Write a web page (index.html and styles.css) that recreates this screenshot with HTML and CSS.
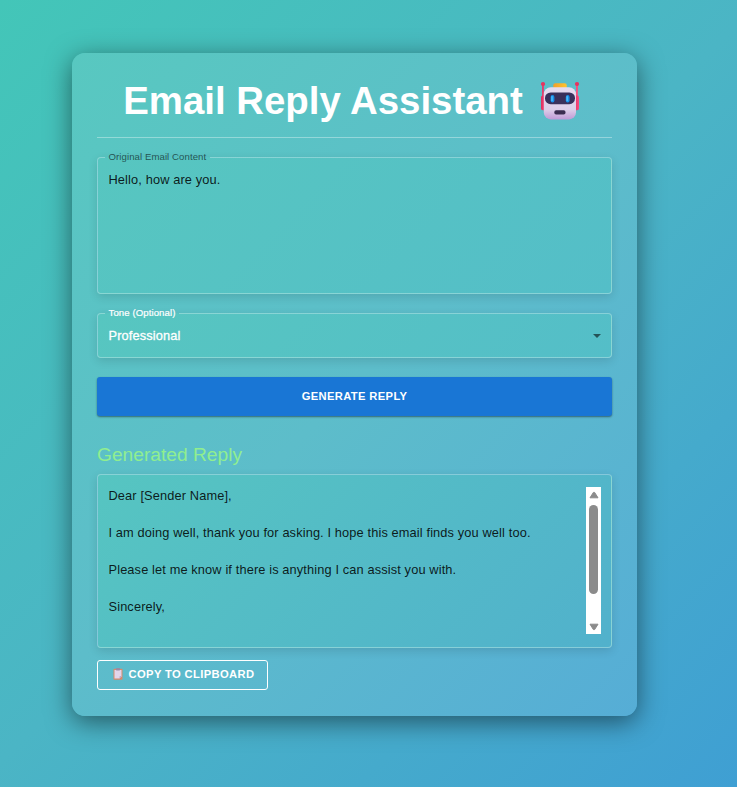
FILE: index.html
```html
<!DOCTYPE html>
<html lang="en">
<head>
<meta charset="utf-8">
<title>Email Reply Assistant</title>
<link rel="stylesheet" href="styles.css">
</head>
<body>
<main class="card">
  <h1 class="title"><span class="title-text">Email Reply Assistant</span>
    <svg class="robot" viewBox="0 0 40 40" aria-hidden="true">
      <defs>
        <linearGradient id="head" x1="0" y1="0" x2="0" y2="1"><stop offset="0" stop-color="#e6dcf0"/><stop offset=".7" stop-color="#dccde8"/><stop offset="1" stop-color="#c09ad6"/></linearGradient>
        <linearGradient id="cap" x1="0" y1="0" x2="1" y2="0"><stop offset="0" stop-color="#f0a02c"/><stop offset="1" stop-color="#ffc42d"/></linearGradient>
        <linearGradient id="ear" x1="0" y1="0" x2="1" y2="0"><stop offset="0" stop-color="#e0305e"/><stop offset="1" stop-color="#fa4a80"/></linearGradient>
      </defs>
      <rect x="2" y="3" width="1.9" height="16" fill="#e0406f"/>
      <rect x="36" y="3" width="1.9" height="16" fill="#f5517f"/>
      <circle cx="3" cy="3" r="2.1" fill="#e8325f"/>
      <circle cx="37" cy="3" r="2.1" fill="#e8325f"/>
      <rect x="1" y="14.5" width="5" height="14.8" rx="1.8" fill="url(#ear)"/>
      <rect x="34" y="14.5" width="5" height="14.8" rx="1.8" fill="url(#ear)"/>
      <rect x="13.3" y="2.2" width="13.4" height="6" rx="2" fill="url(#cap)"/>
      <rect x="3.8" y="6.2" width="32.2" height="32.2" rx="7" fill="url(#head)"/>
      <rect x="5" y="11.4" width="30" height="11.8" rx="5.7" fill="#39305b"/>
      <rect x="10.6" y="14" width="3.8" height="7.4" rx="1.9" fill="#168ee8"/>
      <rect x="25.8" y="14" width="3.8" height="7.4" rx="1.9" fill="#168ee8"/>
      <rect x="11.2" y="15" width="1.6" height="5.2" rx=".8" fill="#46b9fa"/>
      <rect x="26.4" y="15" width="1.6" height="5.2" rx=".8" fill="#46b9fa"/>
      <rect x="14.3" y="29.2" width="11.2" height="4.4" rx="1.8" fill="#3a2c50"/>
    </svg>
  </h1>

  <fieldset class="field field-email">
    <legend><span>Original Email Content</span></legend>
    <div class="value">Hello, how are you.</div>
  </fieldset>

  <fieldset class="field field-tone">
    <legend><span>Tone (Optional)</span></legend>
    <div class="select"><span>Professional</span>
      <svg class="caret" viewBox="0 0 8 4" aria-hidden="true"><path d="M0 0h8L4 4z"/></svg>
    </div>
  </fieldset>

  <button class="generate" type="button">GENERATE REPLY</button>

  <h2 class="subtitle">Generated Reply</h2>
  <div class="field field-reply">
    <div class="reply">
      <p>Dear [Sender Name],</p>
      <p>I am doing well, thank you for asking. I hope this email finds you well too.</p>
      <p>Please let me know if there is anything I can assist you with.</p>
      <p>Sincerely,</p>
    </div>
    <div class="scrollbar">
      <svg class="arrow" viewBox="0 0 10 8" aria-hidden="true"><path d="M4.4 1.4h1.2L9 6.8H1z"/></svg>
      <div class="track"><div class="thumb"></div></div>
      <svg class="arrow" viewBox="0 0 10 8" aria-hidden="true"><path d="M4.4 6.6h1.2L9 1.2H1z"/></svg>
    </div>
  </div>

  <button class="copy" type="button">
    <svg class="clip" viewBox="0 0 10 12" aria-hidden="true">
      <rect x=".5" y=".8" width="9" height="10.9" rx=".8" fill="#d8896b"/>
      <path d="M1.5 2h7v6.3L6.6 10.6H1.5z" fill="#e2d5ea"/>
      <path d="M8.5 8.3 6.6 10.6V8.3z" fill="#b39ac4"/>
      <rect x="3" y="0" width="4" height="2.4" rx=".6" fill="#9a8ba6"/>
    </svg>
    <span>COPY TO CLIPBOARD</span>
  </button>
</main>
</body>
</html>
```
FILE: styles.css
```css
* { box-sizing: border-box; }

html { height: 100%; }

body {
  margin: 0;
  min-height: 787px;
  padding: 53px 100px 71px 72px;
  background: linear-gradient(135deg, #43c6b8 0%, #4bb5c5 50%, #3f9fd3 100%);
  font-family: "Liberation Sans", Arial, sans-serif;
  color: rgba(0, 0, 0, 0.87);
}

.card {
  display: flex;
  flex-direction: column;
  width: 565px;
  height: 663px;
  padding: 25px;
  border-radius: 13px;
  background: linear-gradient(135deg, #58c8c0 0%, #5dbdca 50%, #56add6 100%);
  box-shadow: 0 6px 26px rgba(0, 0, 0, 0.5);
}

.title {
  display: flex;
  align-items: center;
  justify-content: center;
  height: 60px;
  margin: 0 0 19px;
  padding: 0 6px 14px 0;
  border-bottom: 1px solid rgba(255, 255, 255, 0.35);
  font-size: 38.4px;
  line-height: 45px;
  color: #fff;
}

.title-text { white-space: nowrap; }
.robot { width: 40px; height: 40px; margin-left: 17px; }

.field {
  min-width: 0;
  margin: 0 0 19px;
  padding: 0 10px 0 10.5px;
  border: 1px solid rgba(255, 255, 255, 0.3);
  border-radius: 4px;
  background: linear-gradient(135deg, #57c6c0, #54bec8);
  box-shadow: 0 3px 10px rgba(0, 0, 0, 0.12);
  font-size: 12.8px;
  line-height: 18.4px;
  letter-spacing: 0.125px;
}

.field legend {
  height: 11px;
  margin: 0 0 0 -3.5px;
  padding: 0 4px 0 3.5px;
  font-size: 9.6px;
  line-height: 9px;
}

.field-email { height: 142px; margin-top: -5px; }
.field-email legend { color: rgba(0, 0, 0, 0.6); letter-spacing: 0.08px; }
.value { padding-top: 8px; }

.field-tone { height: 50px; margin-top: -5px; color: #fff; }
.select {
  display: flex;
  align-items: center;
  justify-content: space-between;
  padding-top: 8px;
  -webkit-text-stroke: 0.3px #fff;
}
.field-tone legend { letter-spacing: 0.09px; -webkit-text-stroke: 0.2px #fff; }
.caret { width: 8px; height: 4px; fill: rgba(0, 0, 0, 0.56); }

.generate {
  height: 39px;
  flex: none;
  border: 0;
  border-radius: 3px;
  padding: 0 0 1px;
  background: #1976d5;
  box-shadow: 0 1px 2px rgba(0, 0, 0, 0.45);
  color: #fff;
  font: bold 11.2px/20px "Liberation Sans", Arial, sans-serif;
  letter-spacing: 0.36px;
}

.subtitle {
  margin: 26px 0 7px;
  font-size: 19.2px;
  line-height: 25px;
  font-weight: 400;
  color: #90ee90;
}

.field-reply {
  display: flex;
  height: 174px;
  margin-bottom: 12px;
  padding: 12px 10px 13px 10.5px;
  background: linear-gradient(135deg, #56c5c1, #51b1cc);
}

.reply { flex: 1; overflow: hidden; }
.reply p { margin: 0 0 18.6px; white-space: nowrap; }

.scrollbar {
  display: flex;
  flex-direction: column;
  align-items: center;
  width: 15px;
  padding: 4px 0 3px;
  background: #fff;
}

.arrow { flex: none; width: 10px; height: 8px; fill: #8b8b8b; stroke: #8b8b8b; stroke-width: 1; stroke-linejoin: round; }
.track { flex: 1; padding-top: 6px; }
.thumb { width: 9px; height: 89px; border-radius: 5px; background: #8b8b8b; }

.copy {
  display: flex;
  align-items: center;
  justify-content: center;
  flex: none;
  width: 171px;
  height: 30px;
  padding: 0 0 2px 2px;
  border: 1px solid #fff;
  border-radius: 3px;
  background: transparent;
  color: #fff;
  font: bold 11.2px/20px "Liberation Sans", Arial, sans-serif;
  letter-spacing: 0.37px;
}

.clip { width: 10px; height: 12px; margin-right: 6px; }
```
